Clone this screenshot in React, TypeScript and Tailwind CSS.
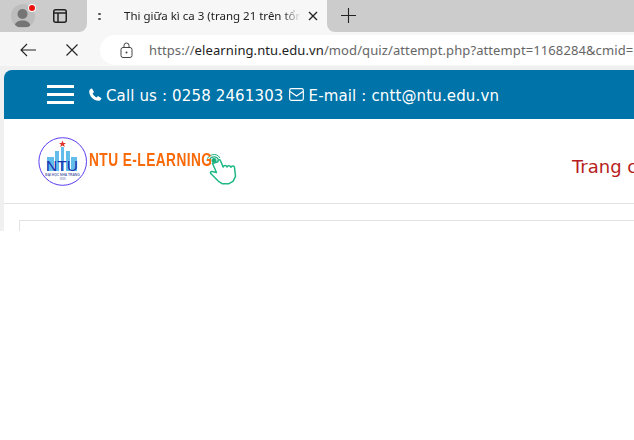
import React from "react";

function Logo() {
  return (
    <svg width="50" height="50" viewBox="0 0 50 50" className="shrink-0">
      <circle cx="24.700" cy="24.500" r="23.800" fill="#fff" stroke="#5a3cf0" strokeWidth="1" />
      <polygon points="24.500,3.500 25.500,6 28,6 26,7.500 26.800,10 24.500,8.500 22.200,10 23,7.500 21,6 23.500,6" fill="#e0352b" />
      <rect x="9" y="20" width="7" height="14" fill="#62bdea" />
      <rect x="17" y="14" width="4" height="20" fill="#62bdea" />
      <rect x="23" y="10" width="3" height="24" fill="#62bdea" />
      <rect x="28" y="14" width="4" height="20" fill="#62bdea" />
      <rect x="33" y="20" width="6" height="14" fill="#62bdea" />
      <text x="24" y="34" textAnchor="middle" fontFamily="Liberation Sans" fontSize="15.500" fill="#1b2fb0">NTU</text>
      <text x="24.500" y="38.800" textAnchor="middle" fontFamily="Liberation Sans" fontSize="3.300" fontWeight="700" fill="#5a68a8">ĐẠI HỌC NHA TRANG</text>
      <text x="24.500" y="43" textAnchor="middle" fontFamily="Liberation Sans" fontSize="2.800" fill="#5a68a8">1959</text>
    </svg>
  );
}

function Hand() {
  return (
    <svg width="30" height="34" viewBox="0 0 30 34" fill="none" className="shrink-0 overflow-visible">
      <circle cx="6" cy="6.500" r="2.500" fill="#1fae7d" />
      <path d="M1.500 6.500a4.600 4.600 0 0 1 9 0" stroke="#1fae7d" strokeWidth="1.200" />
      <path d="M-1 7a7 7 0 0 1 13-3" stroke="#1fae7d" strokeWidth="1" />
      <path d="M4.500 9.500l4 9-4.500-1c-1.500-.2-2.200 1.400-1 2.300l7.500 7.500 4 2.500h6l4.500-2.500 2.500-5-1-9c-.2-1.600-3-1.800-3.600 0-.2-2-3.300-2.300-3.900-.2-.4-2-3.300-2-3.800 0l-2.700-6.400c-.7-1.700-3-.8-2.500 1z" fill="#fff" stroke="#1fb886" strokeWidth="1.500" strokeLinejoin="round" />
    </svg>
  );
}

export default function App() {
  return (
    <div className="h-[440px] w-[634px] overflow-hidden bg-white font-['Noto_Sans',sans-serif]">
      {/* Tab strip */}
      <div className="flex h-8 bg-[#f7f7f7]">
        <div className="flex w-[87px] shrink-0 items-center rounded-br-lg bg-[#cccccc] pl-[11px]">
          <div className="flex h-6 w-6 shrink-0 items-center justify-center overflow-hidden rounded-full bg-[#bdbdbd]">
            <svg width="24" height="24" viewBox="0 0 24 24">
              <circle cx="11.500" cy="10" r="5" fill="#757575" />
              <path d="M3.500 23c0-5 4-6.500 8-6.500s8 1.500 8 6.500z" fill="#757575" />
            </svg>
          </div>
          <span className="relative mb-[16px] ml-[-6px] h-[6px] w-[6px] shrink-0 rounded-full bg-[#ee1111] ring-1 ring-white" />
          <svg width="14" height="14" viewBox="0 0 14 14" fill="none" className="ml-[18px] shrink-0">
            <rect x="0.750" y="0.750" width="12.500" height="12.500" rx="2" stroke="#222" strokeWidth="1.500" />
            <path d="M1 4h12M5 4v9" stroke="#222" strokeWidth="1.500" />
          </svg>
        </div>
        <div className="flex h-8 w-[240px] shrink-0 items-center rounded-t-lg bg-[#f7f7f7] pl-[11px] pr-[9px]">
          <div className="flex w-[26px] shrink-0 flex-col gap-[3px]">
            <span className="h-[2px] w-[3px] rounded-full bg-[#555]" />
            <span className="h-[2px] w-[3px] rounded-full bg-[#555]" />
          </div>
          <span className="w-[181px] overflow-hidden whitespace-nowrap text-[11.500px] text-[#222] [mask-image:linear-gradient(to_right,black_90%,transparent)]">
            Thi giữa kì ca 3 (trang 21 trên tổng số)
          </span>
          <svg width="10" height="10" viewBox="0 0 10 10" className="ml-[7px] shrink-0">
            <path d="M1 1l8 8M9 1l-8 8" stroke="#222" strokeWidth="1.300" />
          </svg>
        </div>
        <div className="flex flex-1 items-center rounded-bl-lg bg-[#cccccc] pb-[2px] pl-[14px]">
          <svg width="15" height="15" viewBox="0 0 15 15">
            <path d="M7.500 0v15M0 7.500h15" stroke="#222" strokeWidth="1.100" />
          </svg>
        </div>
      </div>

      {/* Toolbar */}
      <div className="flex h-[34px] items-center bg-[#f7f7f7] pt-[2px]">
        <div className="flex w-[100px] shrink-0 items-center pl-5">
          <svg width="16" height="14" viewBox="0 0 16 14" fill="none">
            <path d="M16 7H1M7 1L1 7l6 6" stroke="#222" strokeWidth="1.100" />
          </svg>
          <svg width="12" height="12" viewBox="0 0 12 12" fill="none" className="ml-[30px]">
            <path d="M0.500 0.500l11 11M11.500 0.500l-11 11" stroke="#222" strokeWidth="1.100" />
          </svg>
        </div>
        <div className="flex h-[30px] flex-1 items-center overflow-hidden rounded-l-[15px] bg-white pl-5">
          <svg width="13" height="16" viewBox="0 0 13 16" fill="none" className="shrink-0">
            <rect x="1" y="5.500" width="11" height="10" rx="2" stroke="#444" strokeWidth="1" />
            <path d="M4 5.500V3.500a2.500 2.500 0 0 1 5 0v2" stroke="#444" strokeWidth="1" />
            <circle cx="6.500" cy="10.500" r="1" fill="#444" />
          </svg>
          <span className="mt-[2px] ml-[16px] whitespace-nowrap text-[13px] tracking-[0.1px] text-[#666]">
            https://<span className="text-[#222]">elearning.ntu.edu.vn</span>/mod/quiz/attempt.php?attempt=1168284&amp;cmid=
          </span>
        </div>
      </div>

      {/* Page */}
      <div className="flex h-[165px] bg-[#f0f0f0] pt-1">
        <div className="w-1 shrink-0" />
        <div className="flex-1 overflow-hidden rounded-tl-lg bg-white">
          <div className="flex h-[49px] items-center bg-[#0073a8] pl-[43px] text-white">
            <div className="flex w-[27px] shrink-0 flex-col gap-[5px]">
              <span className="h-[3px] bg-white" />
              <span className="h-[3px] bg-white" />
              <span className="h-[3px] bg-white" />
            </div>
            <svg width="13" height="13" viewBox="0 0 13 13" className="ml-[15px] shrink-0">
              <path d="M3 .5L5 4 3.600 5.400c.7 1.700 2.200 3.200 4 4L9 8l3.500 2.200c-.2 1.500-1.500 2.600-3 2.600C4.500 12.800.2 8 .2 3.500.2 2 1.400.7 3 .5z" fill="#fff" />
            </svg>
            <span className="mt-[4px] ml-1 whitespace-nowrap font-['DejaVu_Sans',sans-serif] text-[15px] tracking-[0.14px]">Call us : 0258 2461303</span>
            <svg width="15" height="13" viewBox="0 0 15 13" fill="none" className="ml-[5px] shrink-0">
              <rect x="0.700" y="0.700" width="13.600" height="11.600" rx="1.500" stroke="#fff" strokeWidth="1.200" />
              <path d="M1 3.500l6.500 4.500L14 3.500" stroke="#fff" strokeWidth="1.200" />
            </svg>
            <span className="mt-[4px] ml-[5px] whitespace-nowrap font-['DejaVu_Sans',sans-serif] text-[15px] tracking-[0.14px]">E-mail : cntt@ntu.edu.vn</span>
          </div>
          <div className="flex h-[85px] items-start border-b border-[#e3e3e3] pl-[34px]">
            <div className="mt-[18px] flex items-start">
              <Logo />
              <div className="mt-[13px] ml-[1px] w-[124px]">
                <span className="block origin-left scale-x-[0.76] whitespace-nowrap font-['Liberation_Sans',sans-serif] text-[18px] leading-[20px] font-bold tracking-[0.6px] text-[#f96a0a]">NTU E-LEARNING</span>
              </div>
              <div className="ml-[-5px] mt-[17px]"><Hand /></div>
            </div>
            <span className="mt-[36px] mr-[-26px] ml-auto whitespace-nowrap font-['DejaVu_Sans',sans-serif] text-[18px] leading-6 text-[#b71c1c]">Trang chủ</span>
          </div>
          <div className="pl-[15px] pt-4">
            <div className="h-5 border-t border-l border-[#e3e3e3]" />
          </div>
        </div>
      </div>
    </div>
  );
}
